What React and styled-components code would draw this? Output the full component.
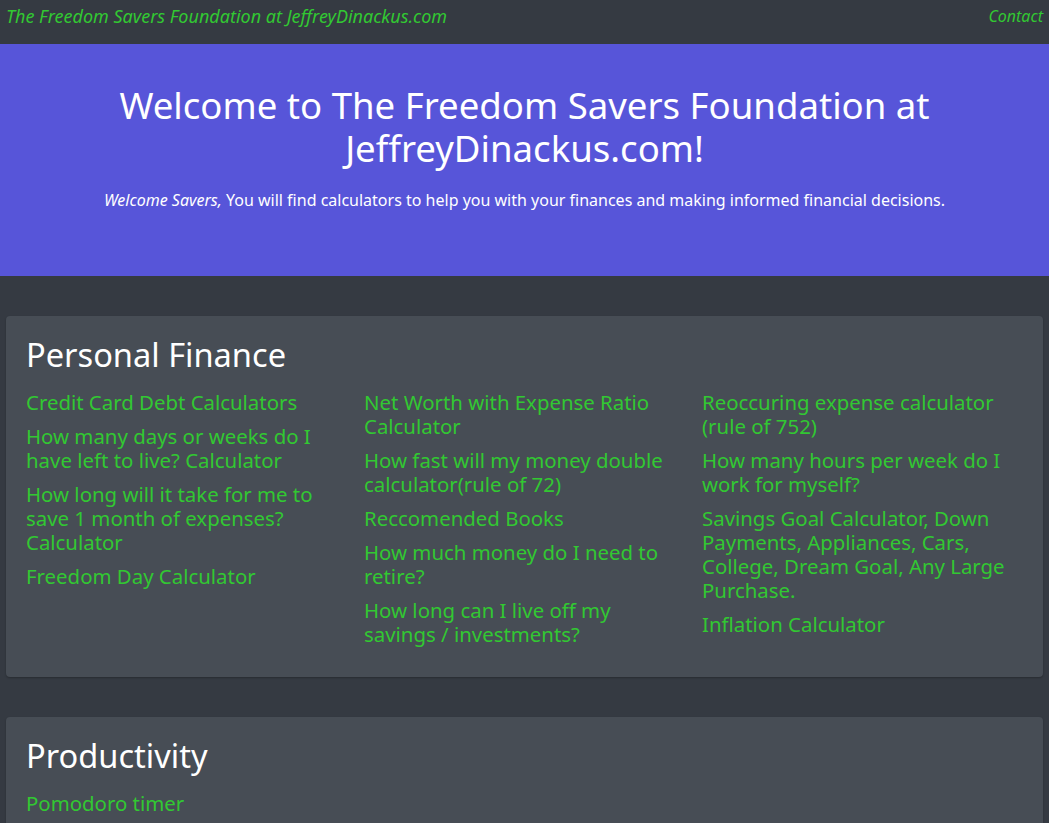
import React from "react";
import styled, { createGlobalStyle } from "styled-components";

const Global = createGlobalStyle`
  html, body { margin: 0; padding: 0; }
  body {
    background: #353a42;
    font-family: "Noto Sans", "Open Sans", sans-serif;
    color: #fff;
  }
  * { box-sizing: border-box; }
`;

const Nav = styled.nav`
  height: 44px;
  background: #353a42;
  display: flex;
  justify-content: space-between;
  align-items: flex-start;
  padding: 4px 6px 0;
`;

const NavLink = styled.a`
  color: #32c832;
  font-style: italic;
  font-size: ${(p) => (p.$small ? "16px" : "18px")};
  line-height: 24px;
  text-decoration: none;
`;

const Hero = styled.header`
  background: #5755d9;
  padding: 40px 20px 40px;
  height: 232px;
  text-align: center;
`;

const HeroTitle = styled.h1`
  margin: 0 auto;
  max-width: 880px;
  font-size: 36.6px;
  line-height: 43px;
  font-weight: 400;
  color: #fff;
`;

const HeroText = styled.p`
  margin: 18px 0 0;
  font-size: 16px;
  line-height: 24px;
  color: #fff;
`;

const Main = styled.main`
  padding: 40px 6px 0;
  display: flex;
  flex-direction: column;
  gap: 40px;
`;

const Card = styled.section`
  background: #474d55;
  border-radius: 4px;
  padding: 20px 20px 21px;
  box-shadow: 0 1px 2px rgba(0, 0, 0, 0.25);
`;

const CardTitle = styled.h2`
  margin: 0 0 16px;
  font-size: 32.6px;
  line-height: 38px;
  font-weight: 400;
  color: #fff;
`;

const Grid = styled.div`
  display: grid;
  grid-template-columns: repeat(3, 1fr);
  column-gap: 17px;
`;

const Column = styled.div`
  display: flex;
  flex-direction: column;
`;

const Item = styled.a`
  display: block;
  color: #32c832;
  font-size: 20.4px;
  line-height: 24px;
  margin-bottom: 10px;
  text-decoration: none;
`;

const columns = [
  [
    "Credit Card Debt Calculators",
    "How many days or weeks do I have left to live? Calculator",
    "How long will it take for me to save 1 month of expenses? Calculator",
    "Freedom Day Calculator",
  ],
  [
    "Net Worth with Expense Ratio Calculator",
    "How fast will my money double calculator(rule of 72)",
    "Reccomended Books",
    "How much money do I need to retire?",
    "How long can I live off my savings / investments?",
  ],
  [
    "Reoccuring expense calculator (rule of 752)",
    "How many hours per week do I work for myself?",
    "Savings Goal Calculator, Down Payments, Appliances, Cars, College, Dream Goal, Any Large Purchase.",
    "Inflation Calculator",
  ],
];

export default function App() {
  return (
    <>
      <Global />
      <Nav>
        <NavLink href="#">The Freedom Savers Foundation at JeffreyDinackus.com</NavLink>
        <NavLink href="#" $small>Contact</NavLink>
      </Nav>
      <Hero>
        <HeroTitle>Welcome to The Freedom Savers Foundation at JeffreyDinackus.com!</HeroTitle>
        <HeroText>
          <em>Welcome Savers,</em> You will find calculators to help you with your finances and making informed financial decisions.
        </HeroText>
      </Hero>
      <Main>
        <Card>
          <CardTitle>Personal Finance</CardTitle>
          <Grid>
            {columns.map((col, i) => (
              <Column key={i}>
                {col.map((t) => (
                  <Item href="#" key={t}>{t}</Item>
                ))}
              </Column>
            ))}
          </Grid>
        </Card>
        <Card>
          <CardTitle>Productivity</CardTitle>
          <Grid>
            <Column>
              <Item href="#">Pomodoro timer</Item>
            </Column>
          </Grid>
        </Card>
      </Main>
    </>
  );
}
